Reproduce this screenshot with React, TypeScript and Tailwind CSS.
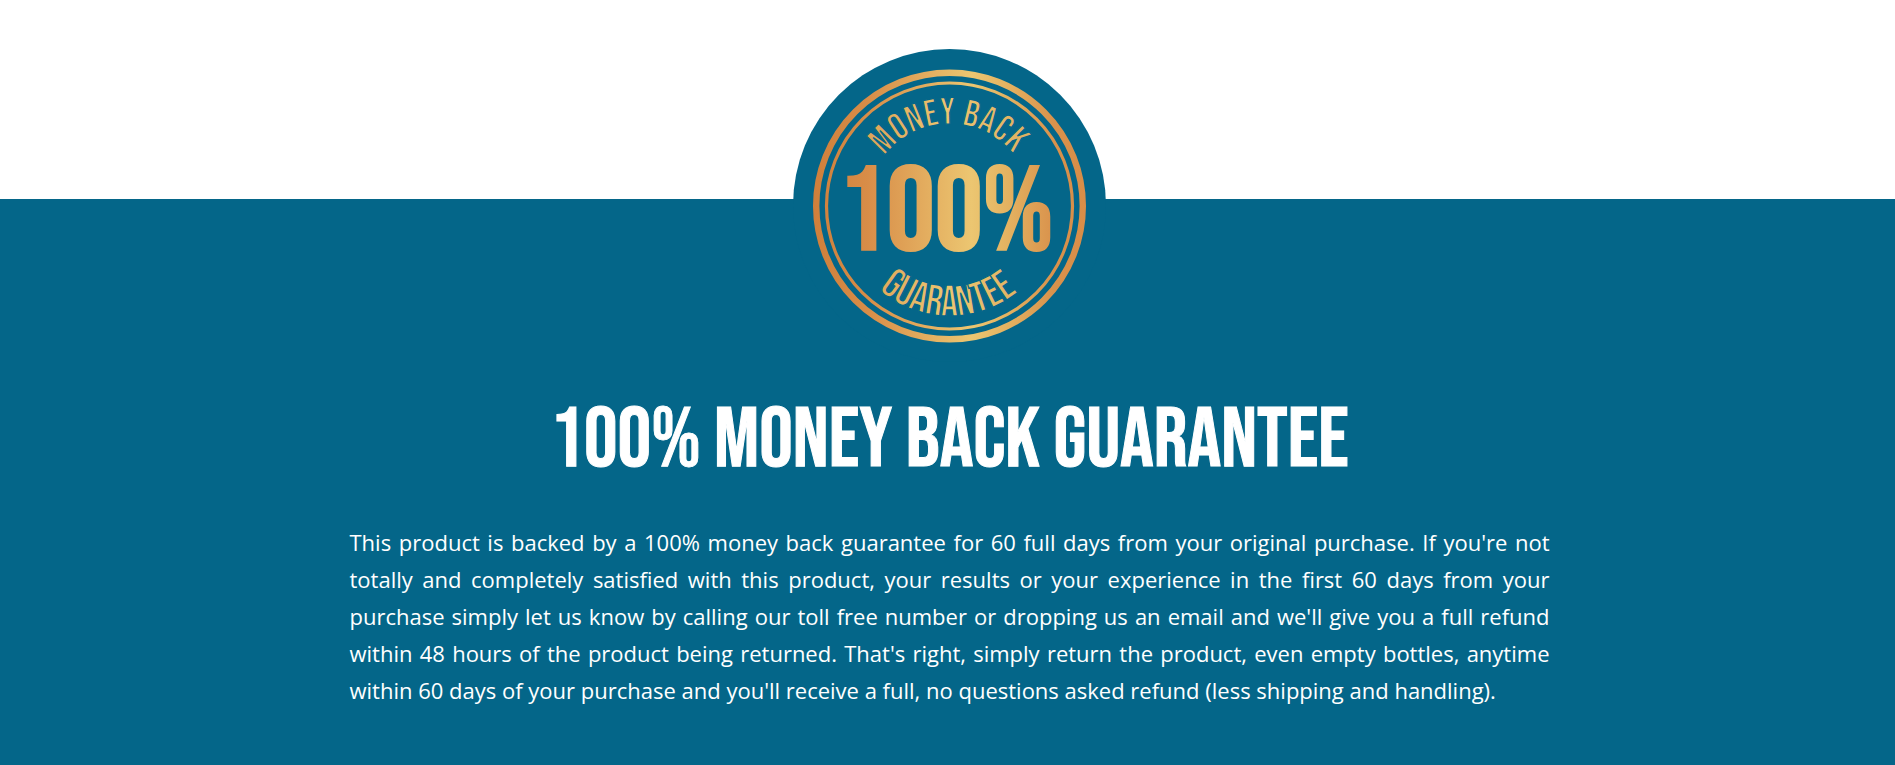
function GuaranteeSeal() {
  return (
    <svg
      viewBox="0 0 313 313"
      role="img"
      aria-label="Money back 100% guarantee"
      className="block w-[313px] h-[313px] font-['Bebas_Neue','Open_Sans_Condensed',sans-serif]"
    >
      <defs>
        <linearGradient id="gold" gradientUnits="userSpaceOnUse" x1="20" y1="0" x2="293" y2="0">
          <stop offset="0" stopColor="#cf7f3b" />
          <stop offset="0.2" stopColor="#d88d48" />
          <stop offset="0.58" stopColor="#ecc671" />
          <stop offset="0.72" stopColor="#e3b160" />
          <stop offset="0.88" stopColor="#d9924c" />
          <stop offset="1" stopColor="#d88d48" />
        </linearGradient>
        <linearGradient id="pale-gold" gradientUnits="userSpaceOnUse" x1="70" y1="0" x2="243" y2="0">
          <stop offset="0" stopColor="#dda257" />
          <stop offset="0.5" stopColor="#ecc671" />
          <stop offset="1" stopColor="#dfae60" />
        </linearGradient>
        <path id="upper-arc" d="M74.5 157 A82 82 0 0 1 238.5 157" />
        <path id="lower-arc" d="M46.5 157 A110 110 0 0 0 266.5 157" />
      </defs>
      <circle cx="156.5" cy="157" r="133.3" fill="none" stroke="url(#gold)" strokeWidth="6.4" />
      <circle cx="156.5" cy="157" r="123" fill="none" stroke="url(#gold)" strokeWidth="3.2" />
      <g textAnchor="middle">
        <g fill="url(#pale-gold)" stroke="#046689" strokeWidth="1.3">
          <text fontSize="38">
            <textPath href="#upper-arc" startOffset="49.5%">MONEY BACK</textPath>
          </text>
          <text fontSize="43">
            <textPath href="#lower-arc" startOffset="49.5%">GUARANTEE</textPath>
          </text>
        </g>
        <text x="153" y="201" fontSize="120" fill="url(#gold)" stroke="url(#gold)" strokeWidth="2">
          100%
        </text>
      </g>
    </svg>
  );
}

export default function App() {
  return (
    <main className="pt-[199px] bg-white">
      <section className="bg-[#046689] text-white pl-1 pb-[60px]">
        <div className="mx-auto max-w-[1200px] flex flex-col items-center">
          <div className="-mt-[150px] rounded-full bg-[#046689]">
            <GuaranteeSeal />
          </div>
          <h2 className="mt-8 text-center text-[84px] leading-[94px] font-normal [-webkit-text-stroke:1px_white] font-['Bebas_Neue','Open_Sans_Condensed',sans-serif]">
            100% MONEY BACK GUARANTEE
          </h2>
          <p className="mt-9 w-full text-justify text-[22px] leading-[37px] font-['Open_Sans',sans-serif]">
            This product is backed by a 100% money back guarantee for 60 full days from your original
            purchase. If you're not totally and completely satisfied with this product, your results or
            your experience in the first 60 days from your purchase simply let us know by calling our
            toll free number or dropping us an email and we'll give you a full refund within 48 hours
            of the product being returned. That's right, simply return the product, even empty bottles,
            anytime within 60 days of your purchase and you'll receive a full, no questions asked
            refund (less shipping and handling).
          </p>
        </div>
      </section>
    </main>
  );
}
